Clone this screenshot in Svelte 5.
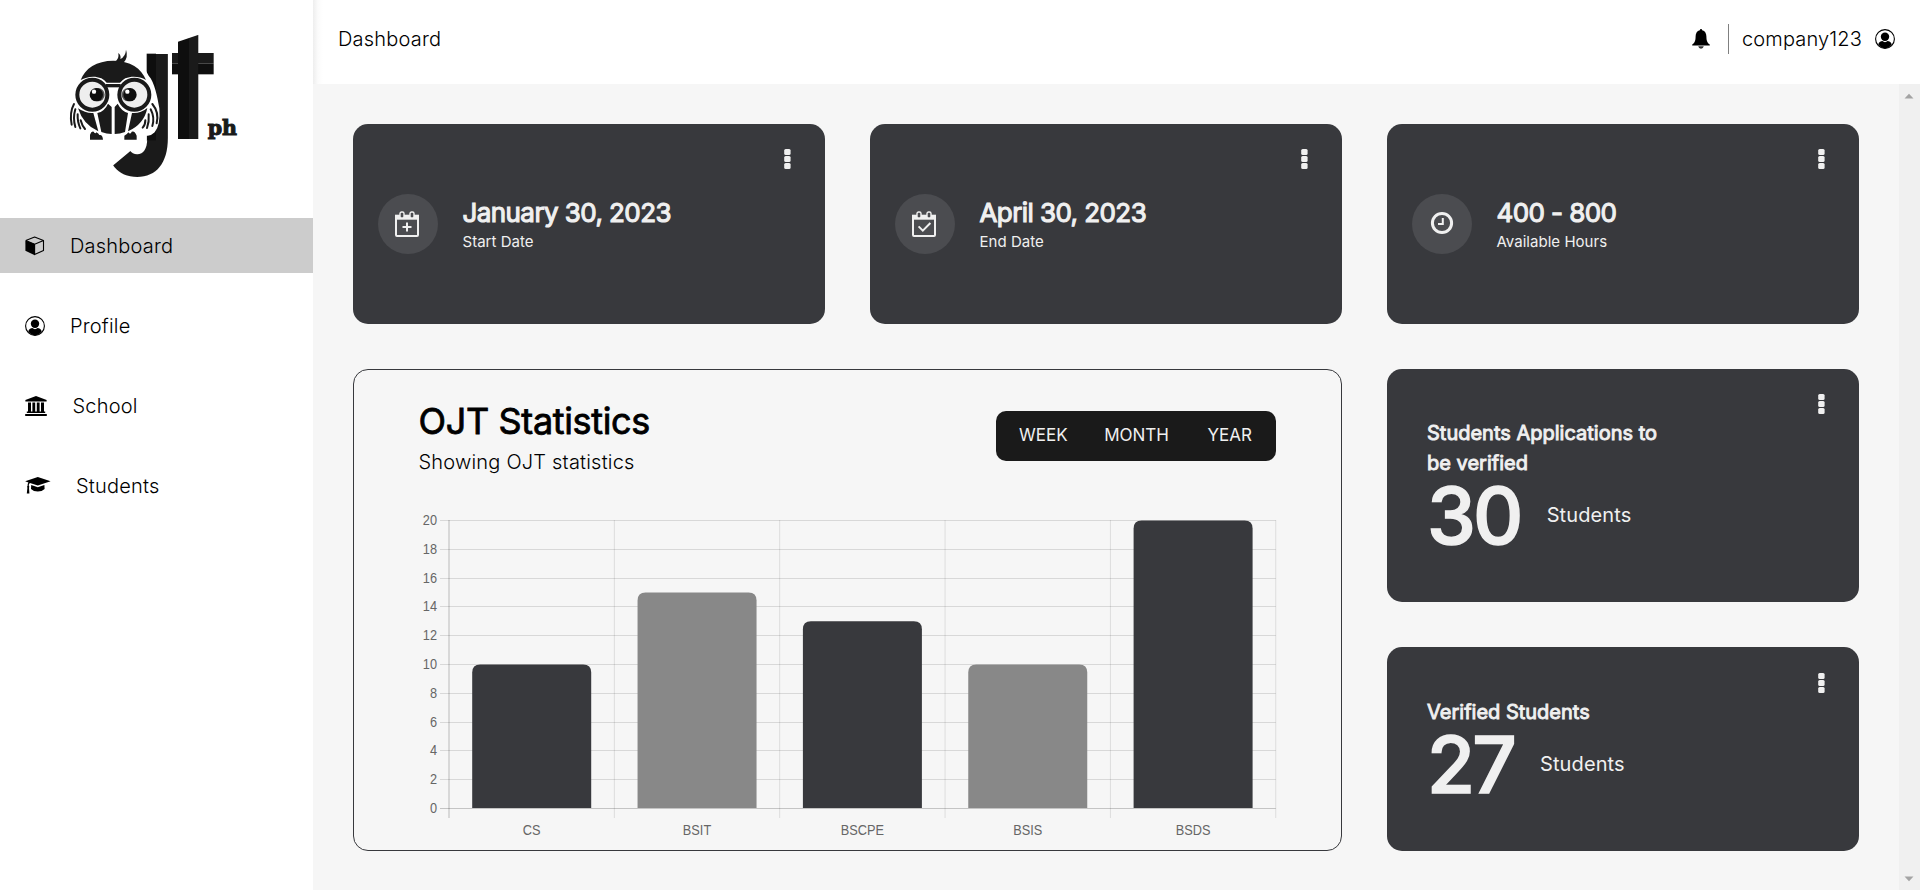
<script>
  const nav = [
    { label: 'Dashboard', icon: 'cube' },
    { label: 'Profile', icon: 'user' },
    { label: 'School', icon: 'bank' },
    { label: 'Students', icon: 'cap' }
  ];
  const stats = [
    { title: 'January 30, 2023', sub: 'Start Date', icon: 'plus' },
    { title: 'April 30, 2023', sub: 'End Date', icon: 'check' },
    { title: '400 - 800', sub: 'Available Hours', icon: 'clock' }
  ];
  const counts = [
    { title: 'Students Applications to be verified', value: 30, tall: true },
    { title: 'Verified Students', value: 27, tall: false }
  ];
  const bars = [
    { name: 'CS', value: 10 },
    { name: 'BSIT', value: 15 },
    { name: 'BSCPE', value: 13 },
    { name: 'BSIS', value: 10 },
    { name: 'BSDS', value: 20 }
  ];
  const ticks = [0, 2, 4, 6, 8, 10, 12, 14, 16, 18, 20];
  const step = 165.35;
  const left = 31;
  const base = 298.5;
  const unit = 14.4;
  const yOf = (v) => Math.round(base - v * unit - 0.5) + 0.5;
  const barPath = (i, v) => {
    const x = left + i * step + 23.2;
    const y = base - v * unit;
    const w = 119;
    return `M${x} ${base - 0.5}V${y + 8}Q${x} ${y} ${x + 8} ${y}H${x + w - 8}Q${x + w} ${y} ${x + w} ${y + 8}V${base - 0.5}Z`;
  };
</script>

{#snippet userIcon()}
  <svg width="20" height="20" viewBox="0 0 20 20">
    <circle cx="10" cy="10" r="9.4" fill="none" stroke="#000" stroke-width="1.1" />
    <circle cx="10" cy="7.7" r="4.2" />
    <path d="M3.2 15.6C4 13 6 12.2 7.4 12.1Q10 14.2 12.6 12.1C14 12.2 16 13 16.8 15.6Q14.3 19.3 10 19.3T3.2 15.6Z" />
  </svg>
{/snippet}

{#snippet dots()}
  <svg class="dots" width="7" height="20" viewBox="0 0 7 20" fill="#f0f0f0">
    <rect x=".2" y="0" width="6.4" height="6" rx="1.5" />
    <rect x=".2" y="7" width="6.4" height="6" rx="1.5" />
    <rect x=".2" y="14" width="6.4" height="6" rx="1.5" />
  </svg>
{/snippet}

<div class="app">
  <aside>
    <svg class="logo" width="190" height="160" viewBox="0 0 570 480">
      <defs>
        <clipPath id="hook"><path d="M250 84H340V470H150V429L205 383L250 345Z" /></clipPath>
        <clipPath id="slant"><path d="M354 50L416 29V342H354Z" /></clipPath>
      </defs>
      <g clip-path="url(#hook)">
        <text class="mark" transform="translate(129 449) scale(.73 1)" font-size="500" fill="#1a1a1a">J</text>
      </g>
      <rect x="260" y="86" width="28" height="260" fill="#0e0e0e" />
      <rect x="336" y="84" width="125" height="32" fill="#1a1a1a" />
      <rect x="336" y="116" width="125" height="32" fill="#0e0e0e" />
      <g clip-path="url(#slant)">
        <rect x="354" y="20" width="33" height="322" fill="#0e0e0e" />
        <rect x="387" y="20" width="29" height="322" fill="#1a1a1a" />
      </g>
      <text class="ph" x="443" y="330" textLength="88" lengthAdjust="spacingAndGlyphs">ph</text>

      <path d="M160 97C215 97 250 118 266 152C284 172 292 215 298 250Q302 300 284 322Q272 334 260 332V346H110L60 300L40 200Q60 97 160 97Z" fill="#fff" />
      <path d="M62 165C75 130 110 107 160 107C210 107 245 130 258 165C240 154 215 152 196 160Q186 166 180 173H140Q134 165 124 160C103 151 80 155 62 165Z" fill="#1a1a1a" />
      <path d="M164 110Q178 104 175 84Q184 92 181 102Q197 94 198 74Q206 97 190 114Z" fill="#1a1a1a" />
      <path d="M54 250Q78 266 100 264L115 319Q70 300 54 250ZM112 264Q134 259 144 236L155 246V327Q140 327 124 321ZM164 327V246L173 236Q184 258 204 264L195 321Q180 327 164 327ZM216 264Q242 266 262 249Q252 298 204 319Z" fill="#1a1a1a" />
      <path d="M138 182H182" stroke="#1a1a1a" stroke-width="10" />
      <g fill="#eee" stroke="#1a1a1a" stroke-width="12">
        <circle cx="97" cy="209" r="45" />
        <circle cx="223" cy="209" r="45" />
      </g>
      <g fill="#555">
        <circle cx="114" cy="209" r="20" />
        <circle cx="205" cy="209" r="20" />
      </g>
      <g fill="#0e0e0e">
        <circle cx="109" cy="209" r="20" />
        <circle cx="210" cy="209" r="20" />
      </g>
      <g fill="#fff">
        <circle cx="102" cy="200" r="6.5" />
        <circle cx="202" cy="200" r="6.5" />
      </g>
      <g fill="none" stroke="#1a1a1a" stroke-width="6" stroke-linecap="round">
        <path d="M42 237Q28 262 35 299M46 253Q38 280 46 306M53 268Q52 292 61 310M62 286Q66 302 75 312" />
        <path d="M277 237Q298 262 290 295M272 253Q285 278 277 303M266 268Q268 290 261 309M256 286Q256 300 248 308" />
      </g>
      <path d="M90 344V330Q94 318 101 320Q106 328 109 322Q116 326 118 330Q128 328 129 344ZM193 344V332Q200 330 205 322Q211 330 215 320Q224 316 230 332V344Z" fill="#1a1a1a" />
    </svg>

    <nav>
      {#each nav as item, i}
        <a class:active={i === 0} href="#{item.icon}">
          {#if item.icon === 'cube'}
            <svg width="20" height="20" viewBox="0 0 20 20">
              <path d="M.4 4.4L9.8 8.1V19.3L.4 14.8Z" />
              <path d="M.8 4.4L9.6 1L18.5 4.4V14.4L9.6 18.6V8.2L18.5 4.4M.8 4.4L9.6 8.2" fill="none" stroke="#000" stroke-width="1.1" stroke-linejoin="round" />
            </svg>
          {:else if item.icon === 'user'}
            {@render userIcon()}
          {:else if item.icon === 'bank'}
            <svg width="22.5" height="20" viewBox="0 0 22.5 20">
              <path d="M11 0L21.6 4V5.4H.4V4ZM3 6.5H6V15.5H3ZM7.4 6.5H10.2V15.5H7.4ZM11.8 6.5H14.6V15.5H11.8ZM16 6.5H19V15.5H16ZM1.8 15.5H20.2V17H1.8ZM.2 18H21.8V20H.2Z" />
            </svg>
          {:else}
            <svg width="26" height="20" viewBox="0 0 26 20">
              <path d="M12.8 1L25.6 5.3L12.8 9.4L5 7Q3.6 7.6 3.8 9.8Q4.8 10.6 4 11.8L4.4 17.6H1.8L2.4 11.8Q1.6 10.6 2.6 9.8Q2.4 7.6 3.4 6.4L.2 5.3ZM6.2 9L12.8 11.2L19.4 9L19.6 13Q17 15.6 12.8 15.6T6 13Z" />
            </svg>
          {/if}
          <span>{item.label}</span>
        </a>
      {/each}
    </nav>
  </aside>

  <div class="main">
    <header>
      <span class="crumb">Dashboard</span>
      <svg class="bell" width="18" height="20" viewBox="0 0 18 20">
        <path d="M9 0Q10.1 0 10.2 1.3C13.2 2 14.4 4.6 14.4 7.6C14.4 12 15.4 14 17.8 15.6V16.6H.2V15.6C2.6 14 3.6 12 3.6 7.6C3.6 4.6 4.8 2 7.8 1.3Q7.9 0 9 0Z" />
        <path d="M6.2 17.3H11.8Q11.2 19.7 9 19.7T6.2 17.3Z" fill="#333" />
      </svg>
      <i></i>
      <span class="name">company123</span>
      {@render userIcon()}
    </header>

    <div class="body">
      <main>
        {#each stats as s}
          <section class="card stat">
            <div class="round">
              {#if s.icon === 'clock'}
                <svg width="24" height="26" viewBox="0 0 24 26" fill="none" stroke="#f0f0f0">
                  <circle cx="12" cy="12" r="9.6" stroke-width="3" />
                  <path d="M12.8 7V13H8" stroke-width="2" />
                </svg>
              {:else}
                <svg class="cal" width="24" height="26" viewBox="0 0 24 26" fill="none" stroke="#f0f0f0">
                  <rect x="1" y="5" width="22" height="20" rx="1" stroke-width="2" />
                  <path d="M0 6.2H24" stroke-width="5" />
                  <rect x="5" y="1" width="4" height="6" rx="1.6" fill="#4b4c50" stroke-width="1.4" />
                  <rect x="15" y="1" width="4" height="6" rx="1.6" fill="#4b4c50" stroke-width="1.4" />
                  {#if s.icon === 'plus'}
                    <path d="M12 11.5V20.5M7.5 16H16.5" stroke-width="2" />
                  {:else}
                    <path d="M6.6 15.4L10.8 19.6L18.4 12" stroke-width="2" />
                  {/if}
                </svg>
              {/if}
            </div>
            <div>
              <h2>{s.title}</h2>
              <p>{s.sub}</p>
            </div>
            {@render dots()}
          </section>
        {/each}

        <section class="panel">
          <div class="head">
            <div>
              <h1>OJT Statistics</h1>
              <p>Showing OJT statistics</p>
            </div>
            <div class="range"><span>WEEK</span><span>MONTH</span><span>YEAR</span></div>
          </div>
          <svg class="chart" width="860" height="330" viewBox="0 0 860 330">
            <g stroke="#000" fill="none">
              {#each ticks as t}
                <path d="M22 {yOf(t)}H{left + step * 5}" stroke-opacity={t === 0 ? 0.2 : 0.12} />
              {/each}
              {#each [0, 1, 2, 3, 4, 5] as n}
                <path d="M{left + n * step} 10V308" stroke-opacity={n === 0 ? 0.12 : 0.1} stroke-width={n === 0 ? 2 : 1} />
              {/each}
            </g>
            {#each bars as b, i}
              <path d={barPath(i, b.value)} fill={i % 2 ? '#888' : '#38393d'} />
              <text transform="translate({left + (i + 0.5) * step} 324.5) scale(.85 1)" text-anchor="middle">{b.name}</text>
            {/each}
            {#each ticks as t}
              <text transform="translate(19 {base - t * unit + 4.5}) scale(.85 1)" text-anchor="end">{t}</text>
            {/each}
          </svg>
        </section>

        <div class="side">
          {#each counts as c}
            <section class="card count" class:tall={c.tall}>
              <h3>{c.title}</h3>
              <div class="num"><b>{c.value}</b><span>Students</span></div>
              {@render dots()}
            </section>
          {/each}
        </div>
      </main>
      <div class="scroll">
        <svg width="10" height="6" viewBox="0 0 10 6"><path d="M.5 5.5L5 .8L9.5 5.5Z" fill="#a3a3a3" /></svg>
        <svg width="10" height="6" viewBox="0 0 10 6"><path d="M.5 .5L5 5.2L9.5 .5Z" fill="#a3a3a3" /></svg>
      </div>
    </div>
  </div>
</div>

<style>
  :global(body) { margin: 0; overflow: hidden; }
  h1, h2, h3, p { margin: 0; font-weight: 400; }
  .app { display: flex; width: 1920px; height: 890px; background: #fff; color: #000; font-family: Inter, sans-serif; font-weight: 300; font-size: 20px; letter-spacing: .2px; }
  svg { display: block; flex: none; }
  aside { width: 313px; flex: none; }
  .logo { margin: 25px 0 33px 60px; overflow: visible; letter-spacing: 0; }
  .mark { font-family: Inter, sans-serif; font-weight: 800; }
  .ph { font: 700 60px "DejaVu Serif", serif; fill: #1a1a1a; stroke: #1a1a1a; stroke-width: 3px; }
  nav { display: flex; flex-direction: column; gap: 25px; }
  nav a { display: flex; align-items: center; gap: 25px; height: 55px; padding-left: 25px; color: #000; text-decoration: none; }
  nav a.active { background: #ccc; }
  .main { flex: 1; display: flex; flex-direction: column; min-width: 0; }
  header { height: 84px; box-sizing: border-box; display: flex; align-items: center; padding: 0 25px 6px; background: linear-gradient(90deg, #eee, #fbfbfb 5px, #fff 10px); }
  .crumb { flex: 1; }
  header i { width: 1px; height: 30px; margin: 0 13px 0 18px; background: #808080; }
  .name { margin-right: 13px; letter-spacing: .15px; }
  .body { flex: 1; display: flex; min-height: 0; background: #f6f6f6; }
  main { flex: 1; display: grid; grid-template-columns: repeat(3, 472px); grid-template-rows: 200px 482px; gap: 45px; padding: 40px; }
  .scroll { width: 21px; box-sizing: border-box; background: #f0f0f0; display: flex; flex-direction: column; justify-content: space-between; align-items: center; padding: 9px 1px 8px 0; }
  .card { position: relative; border-radius: 15px; background: #38393d; color: #f0f0f0; box-sizing: border-box; }
  .card :global(.dots) { position: absolute; right: 34px; top: 25px; }
  .stat { display: flex; align-items: center; gap: 24.5px; padding-left: 25px; }
  .round { width: 60px; height: 60px; border-radius: 50%; background: #4b4c50; display: grid; place-items: center; }
  .cal { margin-right: 2px; }
  h2 { font-size: 26px; line-height: 36px; letter-spacing: -.58px; -webkit-text-stroke: 1.1px #f0f0f0; }
  .stat p { font-size: 15px; line-height: 22px; letter-spacing: .03px; }
  .panel { grid-column: span 2; box-sizing: border-box; border: 1px solid #38393d; border-radius: 15px; padding: 31px 65px 0 64.5px; }
  .head { display: flex; justify-content: space-between; height: 109px; }
  h1 { font-size: 36px; line-height: 40px; letter-spacing: -.35px; -webkit-text-stroke: .8px #000; }
  .head p { font-weight: 300; line-height: 42px; }
  .range { display: flex; justify-content: space-between; box-sizing: border-box; width: 280px; height: 50px; margin-top: 10px; padding: 0 24px 2px 23px; align-items: center; background: #1a1a1a; color: #f0f0f0; border-radius: 10px; font-size: 17px; font-weight: 400; letter-spacing: 0; }
  .range span:first-child { margin-right: -2px; }
  .chart { letter-spacing: 0; margin-left: -.7px; }
  .chart text { font: 15px "Liberation Sans", sans-serif; fill: #666; }
  .side { display: flex; flex-direction: column; gap: 45px; }
  .count { height: 204px; padding: 50px 0 0 40px; }
  .count :global(.dots) { top: 26px; }
  .count.tall { height: 233px; padding-top: 49px; }
  .count.tall :global(.dots) { top: 25px; }
  h3 { width: 250px; font-size: 20px; line-height: 30px; letter-spacing: 0; -webkit-text-stroke: .9px #f0f0f0; }
  .num { display: flex; align-items: center; gap: 26px; line-height: 76px; font-weight: 400; letter-spacing: .1px; }
  .num b { font-size: 78px; font-weight: 500; letter-spacing: -2.8px; -webkit-text-stroke: 1.5px #f0f0f0; }
  .num span { margin-top: -2px; }
</style>
